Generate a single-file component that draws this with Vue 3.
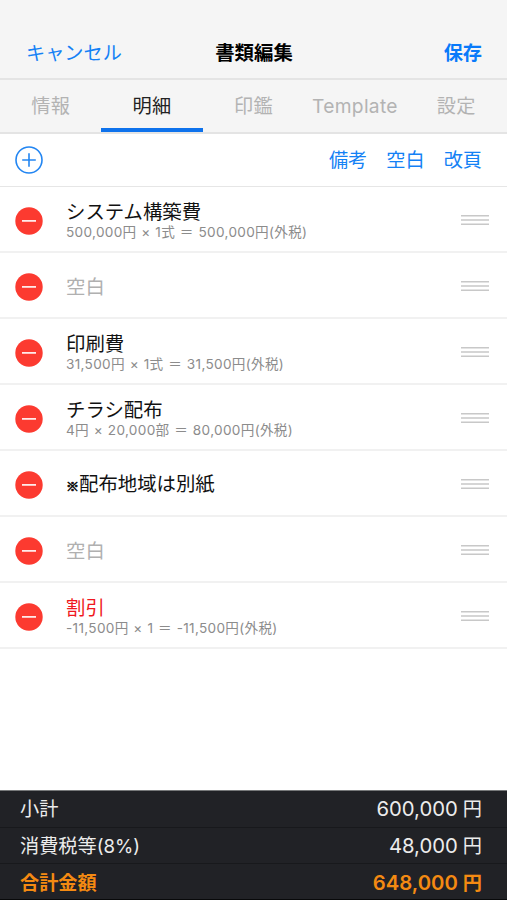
<script setup>
import { ref } from 'vue'

const tabs = ['情報', '明細', '印鑑', 'Template', '設定']
const activeTab = ref('明細')

const items = ref([
  { id: 1, name: 'システム構築費', detail: '500,000円 × 1式 ＝ 500,000円(外税)' },
  { id: 2, name: '空白', type: 'blank' },
  { id: 3, name: '印刷費', detail: '31,500円 × 1式 ＝ 31,500円(外税)' },
  { id: 4, name: 'チラシ配布', detail: '4円 × 20,000部 ＝ 80,000円(外税)' },
  { id: 5, mark: '※', name: '配布地域は別紙' },
  { id: 6, name: '空白', type: 'blank' },
  { id: 7, name: '割引', type: 'discount', detail: '-11,500円 × 1 ＝ -11,500円(外税)' }
])

const totals = [
  { label: '小計', price: '600,000' },
  { label: '消費税等', rate: '(8%)', price: '48,000' },
  { label: '合計金額', price: '648,000', total: true }
]

const removeItem = function(id) {
  items.value = items.value.filter(item => item.id !== id)
}
const addBlank = function() {
  items.value.push({ id: Date.now(), name: '空白', type: 'blank' })
}
</script>

<template>
<div class="screen">
  <header class="header">
    <button class="link">キャンセル</button>
    <h1 class="title">書類編集</h1>
    <button class="link link-bold">保存</button>
  </header>
  <nav class="tabs">
    <button
      v-for="tab in tabs"
      :key="tab"
      class="tab"
      :class="{'tab-active' : tab === activeTab}"
      @click="activeTab = tab"
    >
      {{ tab }}
    </button>
  </nav>
  <div class="toolbar">
    <svg class="icon-add" viewBox="0 0 28 28">
      <circle cx="14" cy="14" r="13" />
      <path d="M14 7.2v13.6M7.2 14h13.6" />
    </svg>
    <div class="toolbar-links">
      <button class="link">備考</button>
      <button class="link" @click="addBlank">空白</button>
      <button class="link">改頁</button>
    </div>
  </div>
  <ul class="list">
    <li v-for="item in items" :key="item.id" class="item">
      <svg class="icon-remove" viewBox="0 0 28 28" @click="removeItem(item.id)">
        <circle cx="14" cy="14" r="13.7" />
        <path d="M7 13.9h14" />
      </svg>
      <div class="item-text">
        <p class="item-name" :class="item.type"><span v-if="item.mark" class="mark">{{ item.mark }}</span>{{ item.name }}</p>
        <p v-if="item.detail" class="item-detail">{{ item.detail }}</p>
      </div>
      <svg class="icon-drag" viewBox="0 0 28 12">
        <path d="M0 1.7h28M0 6h28M0 10.3h28" />
      </svg>
    </li>
  </ul>
  <footer class="totals">
    <div
      v-for="row in totals"
      :key="row.label"
      class="totals-row"
      :class="{'totals-main' : row.total}"
    >
      <span>{{ row.label }}<span v-if="row.rate" class="rate">{{ row.rate }}</span></span>
      <span class="price"><span class="number">{{ row.price }}</span><span>円</span></span>
    </div>
  </footer>
</div>
</template>

<style>
body {
  margin: 0;
}
</style>

<style scoped>
.screen {
  display: flex;
  flex-direction: column;
  height: 900px;
  overflow: hidden;
  background-color: #fff;
  color: #111;
  font-family: Inter, "Noto Sans CJK JP", sans-serif;
  font-size: 19.2px;
  line-height: 24px;
}
button {
  border: 0;
  padding: 0;
  background: none;
  font: inherit;
  white-space: nowrap;
}
.link {
  color: #1481f5;
}
.link-bold {
  color: #087afa;
  font-weight: 700;
}

.header {
  display: grid;
  grid-template-columns: 1fr auto 1fr;
  align-items: center;
  box-sizing: border-box;
  height: 80px;
  padding: 28px 25px 0 26px;
  border-bottom: 2px solid #e4e4e4;
  background-color: #f5f5f5;
}
.header .link {
  text-align: left;
}
.header .link-bold {
  text-align: right;
}
.title {
  margin: 0;
  color: #000;
  font-size: 19.4px;
  font-weight: 700;
}

.tabs {
  display: flex;
  box-sizing: border-box;
  height: 54px;
  border-bottom: 2px solid #e4e4e4;
  background-color: #f5f5f5;
}
.tab {
  flex: 1 1 0;
  box-sizing: border-box;
  min-width: 0;
  border-bottom: 4px solid transparent;
  padding-top: 4px;
  color: #b3b3b3;
  letter-spacing: 0.3px;
}
.tab-active {
  border-bottom-color: #0e72ec;
  color: #222;
}

.toolbar {
  display: flex;
  align-items: center;
  justify-content: space-between;
  box-sizing: border-box;
  height: 53px;
  padding: 0 25px 0 15px;
  border-bottom: 1px solid #e6e6e6;
}
.toolbar-links {
  display: flex;
  gap: 19px;
}
.icon-add {
  width: 28px;
  height: 28px;
  fill: none;
  stroke: #2386f2;
  stroke-width: 1.6;
}

.list {
  flex: 1;
  margin: 0;
  padding: 0;
  list-style: none;
}
.item {
  display: flex;
  align-items: center;
  box-sizing: border-box;
  height: 66px;
  padding: 1px 18px 0 15px;
  border-bottom: 2px solid #f1f1f1;
}
.icon-remove {
  width: 28px;
  height: 28px;
  margin-top: 3px;
  fill: #fc3a30;
  stroke: none;
}
.icon-remove path {
  stroke: #fff;
  stroke-width: 1.6;
}
.item-text {
  flex: 1;
  padding: 2px 0 0 23px;
}
.item-name,
.item-detail {
  margin: 0;
  white-space: nowrap;
}
.item-name {
  font-size: 19.4px;
}
.item-detail {
  margin-top: -1px;
  margin-bottom: 1px;
  color: #8c8c8c;
  font-size: 13.6px;
  letter-spacing: 0.32px;
  line-height: 18px;
  word-spacing: 0.6px;
}
.blank {
  color: #b0b0b0;
}
.discount {
  color: #f01820;
}
.mark {
  font-family: "Noto Sans CJK JP", sans-serif;
  font-size: 13px;
  -webkit-text-stroke: 0.7px #111;
}
.icon-drag {
  width: 28px;
  height: 12px;
  stroke: #c8c8c8;
  stroke-width: 1.4;
}

.totals {
  box-sizing: border-box;
  height: 110px;
  border-top: 1px solid #77797a;
  border-bottom: 1px solid #08090a;
  background-color: #212226;
  color: #ececec;
}
.totals-row {
  display: flex;
  align-items: center;
  justify-content: space-between;
  box-sizing: border-box;
  height: 36.5px;
  padding: 1px 25px 0 20px;
  border-bottom: 1px solid #18191c;
}
.totals-main {
  border-bottom: 0;
  color: #f48a12;
  font-weight: 700;
}
.price {
  display: flex;
  gap: 5px;
}
.number {
  font-size: 20.3px;
}
.totals-main .number {
  font-weight: 600;
}
.rate {
  font-size: 18.6px;
}
</style>
